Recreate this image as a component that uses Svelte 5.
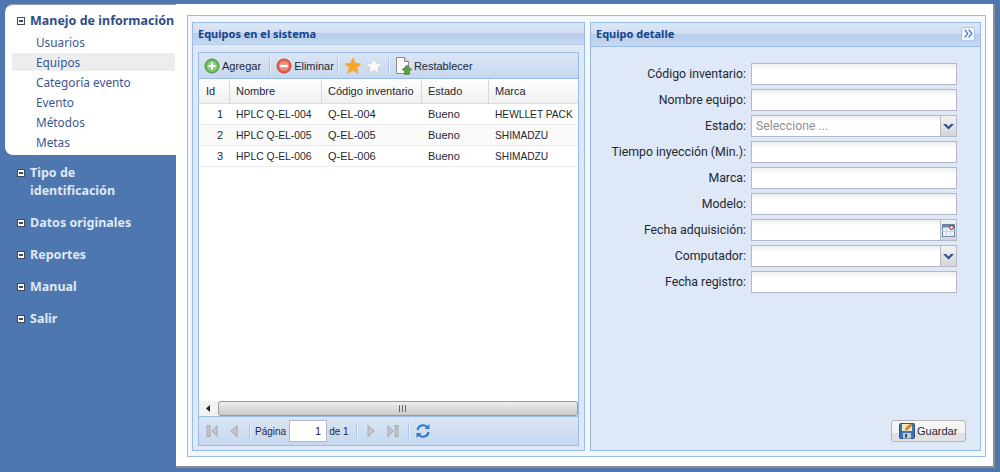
<script lang="ts">
  const menu = [
    { title: 'Manejo de información', open: true, items: ['Usuarios', 'Equipos', 'Categoría evento', 'Evento', 'Métodos', 'Metas'] },
    { title: 'Tipo de identificación', open: false, items: [] },
    { title: 'Datos originales', open: false, items: [] },
    { title: 'Reportes', open: false, items: [] },
    { title: 'Manual', open: false, items: [] },
    { title: 'Salir', open: false, items: [] }
  ];

  const columns = ['Id', 'Nombre', 'Código inventario', 'Estado', 'Marca'];
  const equipos = [
    { id: 1, nombre: 'HPLC Q-EL-004', codigo: 'Q-EL-004', estado: 'Bueno', marca: 'HEWLLET PACK' },
    { id: 2, nombre: 'HPLC Q-EL-005', codigo: 'Q-EL-005', estado: 'Bueno', marca: 'SHIMADZU' },
    { id: 3, nombre: 'HPLC Q-EL-006', codigo: 'Q-EL-006', estado: 'Bueno', marca: 'SHIMADZU' }
  ];

  const campos = [
    { label: 'Código inventario:', kind: 'text' },
    { label: 'Nombre equipo:', kind: 'text' },
    { label: 'Estado:', kind: 'combo', placeholder: 'Seleccione ...' },
    { label: 'Tiempo inyección (Min.):', kind: 'text' },
    { label: 'Marca:', kind: 'text' },
    { label: 'Modelo:', kind: 'text' },
    { label: 'Fecha adquisición:', kind: 'date' },
    { label: 'Computador:', kind: 'combo' },
    { label: 'Fecha registro:', kind: 'text' }
  ];
</script>

<div class="app">
  <nav class="sidebar">
    {#each menu as group}
      <section class="group" class:open={group.open}>
        <h3>
          <span class="toggle"></span>
          <span>{group.title}</span>
        </h3>
        {#each group.items as item}
          <a class="item" class:current={item === 'Equipos'} href="#top">{item}</a>
        {/each}
      </section>
    {/each}
  </nav>

  <main class="content">
    <div class="shell">
      <section class="panel left">
        <header class="panel-head"><span>Equipos en el sistema</span></header>
        <div class="panel-body">
          <div class="grid">
            <div class="toolbar">
              <button class="tb">
                <svg width="16" height="16" viewBox="0 0 16 16">
                  <circle cx="8" cy="8" r="7" fill="#6cb85a" stroke="#4a9140" />
                  <circle cx="8" cy="8" r="5" fill="#8bd07a" />
                  <path d="M7 4.500h2V7h2.500v2H9v2.500H7V9H4.500V7H7z" fill="#fff" />
                </svg>
                Agregar
              </button>
              <i class="sep"></i>
              <button class="tb">
                <svg width="16" height="16" viewBox="0 0 16 16">
                  <circle cx="8" cy="8" r="7" fill="#e2604f" stroke="#c8402f" />
                  <circle cx="8" cy="8" r="5" fill="#f08a78" />
                  <rect x="4" y="6.800" width="8" height="2.400" fill="#fff" />
                </svg>
                Eliminar
              </button>
              <i class="sep narrow"></i>
              <svg class="star" width="18" height="18" viewBox="0 0 18 18">
                <path d="M9 1l2.400 5.300 5.600.6-4.200 3.800 1.200 5.600L9 13.500l-5 2.800 1.200-5.600L1 6.900l5.600-.6z" fill="#f8a42c" stroke="#f0b050" />
              </svg>
              <svg class="star" width="18" height="18" viewBox="0 0 18 18">
                <path d="M9 1l2.400 5.300 5.600.6-4.200 3.800 1.200 5.600L9 13.500l-5 2.800 1.200-5.600L1 6.900l5.600-.6z" fill="#fbfbfb" stroke="#cfd4da" />
              </svg>
              <i class="sep"></i>
              <button class="tb tight">
                <svg width="18" height="18" viewBox="0 0 18 18">
                  <path d="M1.500.5h8l4 4v12h-12z" fill="#fafafa" stroke="#8a8a8a" />
                  <path d="M9.500.5v4h4" fill="#e4e4e4" stroke="#8a8a8a" />
                  <path d="M12 8l5 5h-2.500v4.500h-5V13H7z" fill="#5f9e3e" stroke="#477e2c" stroke-width=".6" />
                </svg>
                Restablecer
              </button>
            </div>

            <div class="table">
              <div class="thead row">
                {#each columns as col}
                  <span class="cell">{col}</span>
                {/each}
              </div>
              <div class="tbody">
                {#each equipos as eq}
                  <div class="row data">
                    <span class="cell num">{eq.id}</span>
                    <span class="cell nombre">{eq.nombre}</span>
                    <span class="cell">{eq.codigo}</span>
                    <span class="cell">{eq.estado}</span>
                    <span class="cell marca">{eq.marca}</span>
                  </div>
                {/each}
              </div>
              <div class="hscroll">
                <span class="arrow"><svg width="5" height="7" viewBox="0 0 5 7"><path d="M4 0v7L0 3.500z" fill="#222" /></svg></span>
                <span class="thumb"><i></i><i></i><i></i></span>
              </div>
            </div>

            <div class="pager">
              <svg class="pg" width="16" height="16" viewBox="0 0 16 16">
                <rect x="3" y="2.500" width="3" height="11" fill="#c4c8cd" stroke="#a4a9ae" />
                <path d="M13 2.500v11L8 8z" fill="#c4c8cd" stroke="#a4a9ae" />
              </svg>
              <svg class="pg" width="16" height="16" viewBox="0 0 16 16">
                <path d="M11 2.500v11L5 8z" fill="#c4c8cd" stroke="#a4a9ae" />
              </svg>
              <i class="sep first"></i>
              <span>Página</span>
              <span class="page-box">1</span>
              <span>de 1</span>
              <i class="sep"></i>
              <svg class="pg" width="16" height="16" viewBox="0 0 16 16">
                <path d="M5 2.500v11L11 8z" fill="#c4c8cd" stroke="#a4a9ae" />
              </svg>
              <svg class="pg" width="16" height="16" viewBox="0 0 16 16">
                <path d="M3 2.500v11L8 8z" fill="#c4c8cd" stroke="#a4a9ae" />
                <rect x="10" y="2.500" width="3" height="11" fill="#c4c8cd" stroke="#a4a9ae" />
              </svg>
              <i class="sep"></i>
              <svg class="pg" width="16" height="16" viewBox="0 0 16 16" fill="none" stroke="#2b78d0" stroke-width="2">
                <path d="M2.500 7a5.500 5.500 0 0 1 9.500-3" />
                <path d="M13.500 9a5.500 5.500 0 0 1-9.500 3" />
                <path d="M14.500 1v5h-5z" fill="#2b78d0" stroke="none" />
                <path d="M1.500 15v-5h5z" fill="#2b78d0" stroke="none" />
              </svg>
            </div>
          </div>
        </div>
      </section>

      <section class="panel right">
        <header class="panel-head">
          <span>Equipo detalle</span>
          <button class="collapse" aria-label="Contraer">
            <svg width="9" height="9" viewBox="0 0 9 9" fill="none" stroke="#3f73b5" stroke-width="1.200">
              <path d="M.7.7l3 3.800-3 3.800M4.700.7l3 3.800-3 3.800" />
            </svg>
          </button>
        </header>
        <form class="form-body">
          <div class="fields">
            {#each campos as campo}
              <div class="field">
                <label for={campo.label}>{campo.label}</label>
                <div class="input-wrap">
                  <input id={campo.label} type="text" placeholder={campo.placeholder ?? ''} />
                  {#if campo.kind === 'combo'}
                    <span class="trigger">
                      <svg width="11" height="7" viewBox="0 0 11 7"><path d="M0 1h3l2.500 2.500L8 1h3L5.500 6.500z" fill="#2f4f8a" /></svg>
                    </span>
                  {:else if campo.kind === 'date'}
                    <span class="trigger">
                      <svg width="13" height="13" viewBox="0 0 13 13">
                        <rect x=".5" y=".5" width="12" height="12" fill="#eef2f8" stroke="#6c86a8" />
                        <rect x=".5" y=".5" width="12" height="3" fill="#6c86a8" />
                        <path d="M4.500 3.500v9M8.500 3.500v9M.5 7.500h12" stroke="#c9d4e4" />
                        <circle cx="9.500" cy="3.500" r="2" fill="#fff" stroke="#a01c1c" />
                      </svg>
                    </span>
                  {/if}
                </div>
              </div>
            {/each}
          </div>
          <div class="actions">
            <button type="button" class="save">
              <svg width="16" height="16" viewBox="0 0 16 16">
                <rect x=".5" y=".5" width="15" height="15" rx="1" fill="#3e74b8" stroke="#27538c" />
                <rect x="3" y="1" width="10" height="7" fill="#f6e7b8" />
                <rect x="4" y="10" width="8" height="5.500" fill="#c8ccd2" />
                <rect x="6" y="11" width="2" height="3.500" fill="#3c4a5c" />
                <path d="M6.500 7l1-2.500L12 .5l1.500 1.500-4.500 4z" fill="#e08a1e" stroke="#8a4f10" stroke-width=".5" />
              </svg>
              Guardar
            </button>
          </div>
        </form>
      </section>
    </div>
  </main>
</div>

<style>
  :global(body) {
    background: #4e77b0;
  }

  .app {
    display: flex;
    height: 472px;
    width: 1000px;
    overflow: hidden;
    font-family: "Liberation Sans", Arial, sans-serif;
    font-size: 11px;
    color: #1f2733;
  }

  .sidebar {
    width: 176px;
    flex: none;
    padding: 4px 0 0 5px;
    box-sizing: border-box;
    font-family: "Noto Sans", sans-serif;
  }

  .group {
    padding: 0 0 0 12px;
    margin-bottom: 14px;
  }

  .group.open {
    background: #fff;
    border-top: 1px solid #9a9fa6;
    border-radius: 8px 0 0 8px;
    padding: 7px 1px 3px 12px;
    margin-bottom: 9px;
    height: 151px;
    box-sizing: border-box;
  }

  h3 {
    display: flex;
    margin: 0;
    width: 130px;
    font-size: 12.500px;
    line-height: 18px;
    font-weight: 700;
    color: #dfe8f6;
  }

  .open h3 {
    width: auto;
    white-space: nowrap;
    color: #2f4d86;
    margin-bottom: 3px;
  }

  .toggle {
    position: relative;
    flex: none;
    width: 6px;
    height: 6px;
    margin: 5px 5px 0 0;
    background: #fff;
    border: 1px solid #3c4a5c;
  }

  .toggle::after {
    content: "";
    position: absolute;
    left: 1px;
    right: 1px;
    top: 2px;
    height: 2px;
    background: #3c4a5c;
  }

  .item {
    display: block;
    height: 18px;
    line-height: 18px;
    margin: 0 0 2px -5px;
    padding-left: 24px;
    font-size: 11.800px;
    color: #3a5691;
    text-decoration: none;
  }

  .item.current {
    background: #ecedef;
  }

  .content {
    flex: 1;
    background: #fff;
    margin: 4px 5px 4px 0;
    padding: 11px 0 0 11px;
    border-right: 2px solid #8a8f96;
    border-bottom: 2px solid #8a8f96;
    display: flex;
    align-items: flex-start;
  }

  .shell {
    flex: none;
    box-sizing: border-box;
    width: 799px;
    height: 442px;
    border: 1px solid #99bbe8;
    background: #f4f8fd;
    padding: 6px 4px 5px 4px;
    display: flex;
    gap: 5px;
  }

  .panel {
    display: flex;
    flex-direction: column;
    border: 1px solid #99bbe8;
    background: #dfe8f6;
    box-sizing: border-box;
  }

  .panel.left {
    width: 393px;
  }

  .panel.right {
    width: 391px;
  }

  .panel-head {
    flex: none;
    box-sizing: border-box;
    height: 22px;
    display: flex;
    align-items: center;
    justify-content: space-between;
    padding: 0 5px 0 5px;
    border-bottom: 1px solid #b5cdec;
    background: linear-gradient(#dce7f6 0, #d1dff3 50%, #b7cdec 50%, #c6d8f1 100%);
    font-family: "Noto Sans", sans-serif;
    font-size: 11px;
    font-weight: 700;
    color: #15428b;
  }

  .right .panel-head {
    height: 24px;
    padding-bottom: 2px;
    border-bottom-color: #99bbe8;
    background: linear-gradient(#dce7f6 0, #d1dff3 46%, #b7cdec 46%, #c6d8f1 100%);
  }

  .collapse {
    display: flex;
    align-items: center;
    justify-content: center;
    width: 14px;
    height: 14px;
    padding: 0;
    border: 1px solid #a9c6ec;
    border-radius: 2px;
    background: #eef4fc;
  }

  .panel-body {
    flex: 1;
    padding: 7px 5px 4px;
    display: flex;
    min-height: 0;
  }

  .grid {
    flex: 1;
    display: flex;
    flex-direction: column;
    border: 1px solid #99bbe8;
    background: #fff;
    min-width: 0;
  }

  .toolbar {
    flex: none;
    box-sizing: border-box;
    height: 26px;
    display: flex;
    align-items: center;
    padding-left: 5px;
    border-bottom: 1px solid #99bbe8;
    background: linear-gradient(#dbe6f5, #c6d7ee);
  }

  .tb {
    display: flex;
    align-items: center;
    gap: 2px;
    padding: 0;
    border: 0;
    background: none;
    font: inherit;
    color: inherit;
  }

  .tb.tight {
    gap: 1px;
  }

  .sep {
    flex: none;
    width: 1px;
    height: 16px;
    margin: 0 5px 0 8px;
    background: #aac8ee;
    border-right: 1px solid #e8f0fa;
  }

  .sep.narrow {
    margin-left: 3px;
  }

  .star {
    flex: none;
  }

  .star + .star {
    margin-left: 3px;
  }

  .star + .sep {
    margin-left: 5px;
  }

  .table {
    flex: 1;
    display: flex;
    flex-direction: column;
    min-height: 0;
  }

  .row {
    display: grid;
    grid-template-columns: 31px 92px 100px 67px 1fr;
  }

  .cell {
    padding: 0 6px;
    white-space: nowrap;
    overflow: hidden;
  }

  .cell:first-child {
    padding: 0 7px;
  }

  .thead {
    flex: none;
    height: 25px;
    line-height: 24px;
    background: linear-gradient(#fff, #eff0f1);
    border-bottom: 1px solid #dcdcdc;
    box-sizing: border-box;
  }

  .thead .cell {
    border-right: 1px solid #d8d8d8;
  }

  .thead .cell:last-child {
    border-right: 0;
  }

  .tbody {
    flex: 1;
  }

  .data {
    height: 21px;
    line-height: 20px;
    box-sizing: border-box;
    border-bottom: 1px solid #ececec;
  }

  .data:nth-child(even) {
    background: #fafafa;
  }

  .num {
    text-align: right;
  }

  .nombre {
    font-size: 10.400px;
    padding-top: 1px;
  }

  .marca {
    font-size: 10.200px;
    padding-top: 1px;
  }

  .hscroll {
    flex: none;
    box-sizing: border-box;
    height: 16px;
    display: flex;
    background: #e8e8e8;
    border-bottom: 1px solid #99bbe8;
  }

  .arrow {
    flex: none;
    width: 19px;
    display: flex;
    align-items: center;
    justify-content: center;
    background: #f2f2f2;
  }

  .thumb {
    flex: 1;
    display: flex;
    align-items: center;
    justify-content: center;
    gap: 2px;
    padding-left: 8px;
    border: 1px solid #9a9a9a;
    border-radius: 3px;
    background: linear-gradient(#efefef, #c9c9c9);
  }

  .thumb i {
    width: 1px;
    height: 7px;
    background: #666;
  }

  .pager {
    flex: none;
    box-sizing: border-box;
    height: 28px;
    display: flex;
    align-items: center;
    padding-left: 5px;
    font-size: 10px;
    background: linear-gradient(#dbe6f5, #c6d7ee);
  }

  .pg {
    flex: none;
    margin-right: 6px;
  }

  .pager .sep {
    margin: 0 5px 0 0;
  }

  .pager .sep.first {
    margin: 0 4px 0 1px;
  }

  .pager span + .sep {
    margin-left: 7px;
  }

  .pager .pg + .sep {
    margin-left: 1px;
  }

  .page-box {
    width: 38px;
    height: 22px;
    margin: 0 2px 0 3px;
    line-height: 20px;
    text-align: right;
    padding-right: 5px;
    box-sizing: border-box;
    background: #fff;
    border: 1px solid #b5b8c8;
    font-size: 11px;
  }

  .form-body {
    flex: 1;
    display: flex;
    flex-direction: column;
    justify-content: space-between;
    padding: 16px 14px 8px 0;
    font-family: Roboto, sans-serif;
  }

  .fields {
    display: flex;
    flex-direction: column;
    gap: 4px;
  }

  .field {
    display: flex;
    align-items: center;
    justify-content: flex-end;
    gap: 5px;
    height: 22px;
    padding-right: 9px;
    font-size: 12.300px;
  }

  .input-wrap {
    position: relative;
    width: 206px;
    height: 22px;
  }

  input {
    width: 100%;
    height: 100%;
    box-sizing: border-box;
    border: 1px solid #b5b8c8;
    padding: 0 4px;
    font: inherit;
    background: linear-gradient(#eeeeee, #fff 30%, #fff);
  }

  input::placeholder {
    color: #8f8f8f;
  }

  .trigger {
    position: absolute;
    right: 0;
    top: 0;
    width: 17px;
    height: 22px;
    box-sizing: border-box;
    display: flex;
    align-items: center;
    justify-content: center;
    border: 1px solid #b5b8c8;
    background: linear-gradient(#f3f3f3, #d4d4d4);
  }

  .actions {
    display: flex;
    justify-content: flex-end;
  }

  .save {
    display: flex;
    align-items: center;
    gap: 2px;
    width: 75px;
    height: 22px;
    padding: 0 0 0 7px;
    box-sizing: border-box;
    border: 1px solid #b4b4b4;
    border-radius: 3px;
    background: linear-gradient(#f6f6f6 0, #f3f3f3 60%, #e0e0e0 60%, #e4e4e4 100%);
    font-family: "Liberation Sans", sans-serif;
    font-size: 11px;
    color: inherit;
  }
</style>
